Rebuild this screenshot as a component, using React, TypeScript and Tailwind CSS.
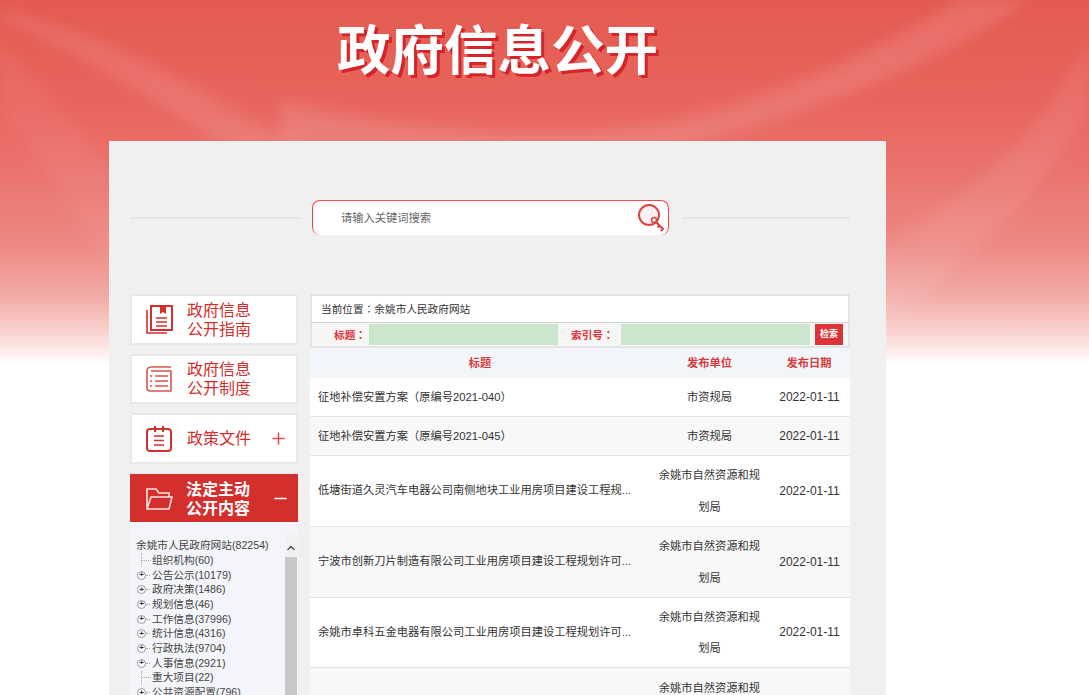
import React from 'react';
import { Plus, Minus, ChevronUp } from 'lucide-react';

const rows = [
  { title: '征地补偿安置方案（原编号2021-040）', unit: ['市资规局'], date: '2022-01-11' },
  { title: '征地补偿安置方案（原编号2021-045）', unit: ['市资规局'], date: '2022-01-11' },
  { title: '低塘街道久灵汽车电器公司南侧地块工业用房项目建设工程规...', unit: ['余姚市自然资源和规', '划局'], date: '2022-01-11' },
  { title: '宁波市创新刀片制造有限公司工业用房项目建设工程规划许可...', unit: ['余姚市自然资源和规', '划局'], date: '2022-01-11' },
  { title: '余姚市卓科五金电器有限公司工业用房项目建设工程规划许可...', unit: ['余姚市自然资源和规', '划局'], date: '2022-01-11' },
  { title: '', unit: ['余姚市自然资源和规', '划局'], date: '' },
];

const tree = [
  { label: '组织机构(60)', leaf: true },
  { label: '公告公示(10179)' },
  { label: '政府决策(1486)' },
  { label: '规划信息(46)' },
  { label: '工作信息(37996)' },
  { label: '统计信息(4316)' },
  { label: '行政执法(9704)' },
  { label: '人事信息(2921)' },
  { label: '重大项目(22)', leaf: true },
  { label: '公共资源配置(796)' },
];

function GuideIcon() {
  return (
    <svg width="27" height="29" viewBox="0 0 27 29" fill="none" stroke="#d32f2c" strokeWidth="2">
      <path d="M5 1h21v24H5z" />
      <path d="M1 5v23h20" strokeWidth="1.6" />
      <path d="M14 1h6v8l-3-2-3 2z" fill="#d32f2c" stroke="none" />
      <path d="M10 13h11M10 17h11M10 21h11" strokeWidth="1.5" />
    </svg>
  );
}

function SystemIcon() {
  return (
    <svg width="26" height="26" viewBox="0 0 26 26" fill="none" stroke="#d9534f" strokeWidth="1.6">
      <path d="M25 1H5C2 1 1 3 1 5v17c0 2 1 3 3 3h21V5H5" />
      <path d="M9 10h13M9 15h13M9 20h13" />
      <path d="M4 10h2M4 15h2M4 20h2" />
    </svg>
  );
}

function PolicyIcon() {
  return (
    <svg width="26" height="26" viewBox="0 0 26 26" fill="none" stroke="#d32f2c" strokeWidth="2">
      <rect x="1" y="3" width="24" height="22" rx="3" />
      <path d="M9 0v6M17 0v6" stroke="#d32f2c" />
      <path d="M8 10h10M8 14.5h10M8 19h10" strokeWidth="1.6" />
    </svg>
  );
}

function FolderIcon() {
  return (
    <svg width="27" height="24" viewBox="0 0 27 24" fill="none" stroke="#fbe4e3" strokeWidth="1.6">
      <path d="M1 21V2h9l3 4h10v4" />
      <path d="M1 22l4-12h21l-3 12z" />
    </svg>
  );
}

function KeySearchIcon() {
  return (
    <svg width="30" height="30" viewBox="0 0 30 30" fill="none">
      <circle cx="12" cy="12" r="10" fill="#fdf1f2" stroke="#dc4545" strokeWidth="2" />
      <circle cx="17" cy="17" r="2.5" stroke="#dc4545" strokeWidth="1.5" />
      <path d="M19 19l7.5 7.5M22.5 22.5l-2 2M26 26l-2 2" stroke="#dc4545" strokeWidth="2.2" />
    </svg>
  );
}

// centred full-width punctuation, as in the original
function Punct({ children }: { children: React.ReactNode }) {
  return <span className="font-['Noto_Sans_CJK_TC',sans-serif]">{children}</span>;
}

function RowTitle({ text }: { text: string }) {
  const parts = text.split(/([（）])/);
  return (
    <>
      {parts.map((p, i) => (p === '（' || p === '）' ? <Punct key={i}>{p}</Punct> : <React.Fragment key={i}>{p}</React.Fragment>))}
    </>
  );
}

function TreeNode({ label, leaf }: { label: string; leaf?: boolean }) {
  return (
    <div className="flex h-[14.7px] items-center">
      <span className="ml-[1px] flex w-[15px] shrink-0 items-center">
        {leaf ? (
          <span className="ml-[4px] flex h-[14px] w-[10px] items-center border-l border-dotted border-[#aaaaaa]">
            <span className="w-full border-t border-dotted border-[#aaaaaa]" />
          </span>
        ) : (
          <>
            <span className="flex h-[9px] w-[9px] shrink-0 items-center justify-center rounded-full border border-[#999999] bg-white text-[8px] font-bold leading-none text-[#333333]">+</span>
            <span className="w-[4px] border-t border-dotted border-[#aaaaaa]" />
          </>
        )}
      </span>
      <span className="whitespace-nowrap">{label}</span>
    </div>
  );
}

function SideItem({ icon, lines, after, h }: { icon: React.ReactNode; lines: string[]; after?: React.ReactNode; h: string }) {
  return (
    <div className={`flex items-center border-2 border-[#e8e8e8] bg-white pl-[14px] ${h}`}>
      <span className="flex w-[41px] shrink-0 justify-start">{icon}</span>
      <span className="flex-1 text-[16px] leading-[19px] text-[#d32f2c]">
        {lines.map((l) => <div key={l}>{l}</div>)}
      </span>
      {after}
    </div>
  );
}

export default function App() {
  return (
    <div className="relative h-[695px] w-full overflow-hidden bg-white font-['Liberation_Sans','Noto_Sans_CJK_SC',sans-serif]">
      {/* banner background */}
      <div className="absolute inset-x-0 top-0 h-[365px] bg-[linear-gradient(to_bottom,#e45a50_0%,#e8665e_30%,#eb7670_50%,#ee8a85_68%,#f3aeaa_82%,#fadcda_93%,#ffffff_100%)]" />
      <svg className="absolute left-0 top-0 blur-[7px]" width="1089" height="365" viewBox="0 0 1089 365" fill="none">
        <path d="M0 20C80 50 180 120 300 190 340 210 420 235 500 250L510 215C400 190 300 150 200 90 120 45 50 20 0 10z" fill="#ffffff" opacity="0.1" />
        <path d="M280 140C420 190 560 190 660 150 760 130 880 90 1000 20L1030 0H960C860 60 760 105 650 125 540 140 400 130 280 100z" fill="#ffffff" opacity="0.12" />
        <path d="M760 300C880 260 1000 180 1060 90L1089 40V110C1040 200 950 280 886 326z" fill="#ffffff" opacity="0.08" />
        <path d="M0 40C60 100 140 220 260 300L130 300C80 220 30 150 0 110z" fill="#ffffff" opacity="0.05" />
      </svg>

      <div className="relative">
        {/* page title */}
        <div className="flex h-[141px] justify-center pr-[94px]">
          <h1 className="mt-[17px] h-[70px] text-[53.5px] font-bold leading-[70px] text-white [text-shadow:3px_3px_0_#d5242a]">政府信息公开</h1>
        </div>

        <div className="ml-[109px] w-[777px] bg-[#f0f0f0] px-[21px] pb-[40px]">
          {/* search */}
          <div className="flex items-center pt-[59px]">
            <div className="h-[2px] w-[169px] bg-[#e4e4e4]" />
            <div className="mx-[13px] flex h-[35px] w-[357px] items-center justify-between rounded-[8px] border border-b-0 border-[#f0484e] bg-white pl-[28px] pr-[1px] text-[11.25px] text-[#666666]">
              <span>请输入关键词搜索</span>
              <KeySearchIcon />
            </div>
            <div className="h-[2px] w-[168px] bg-[#e4e4e4]" />
          </div>

          <div className="mt-[59px] flex gap-[12px]">
            {/* left column */}
            <div className="flex w-[168px] shrink-0 flex-col">
              <div className="flex flex-col gap-[9px]">
                <SideItem h="h-[51px]" icon={<GuideIcon />} lines={['政府信息', '公开指南']} />
                <SideItem h="h-[50px]" icon={<SystemIcon />} lines={['政府信息', '公开制度']} />
                <SideItem h="h-[51px]" icon={<PolicyIcon />} lines={['政策文件']} after={<Plus size={19} className="mr-[8px] text-[#e05252]" />} />
                <div className="flex h-[49px] items-center border-t border-[#e8e8e8] bg-[#d32f2c] pl-[16px] pt-[1px]">
                  <span className="flex w-[40px] shrink-0 justify-start"><FolderIcon /></span>
                  <span className="flex-1 text-[16px] font-bold leading-[19px] text-white">
                    <div>法定主动</div>
                    <div>公开内容</div>
                  </span>
                  <Minus size={19} className="mr-[8px] text-white" />
                </div>
              </div>
              <div className="flex h-[180px] bg-[#f3f5fa] pl-[6px] pt-[16px] text-[10.67px] text-[#444444]">
                <div className="flex-1 leading-[15px]">
                  <div className="h-[15px] whitespace-nowrap">余姚市人民政府网站(82254)</div>
                  {tree.map((t) => <TreeNode key={t.label} label={t.label} leaf={t.leaf} />)}
                </div>
                <div className="-mt-[5px] mr-[1px] w-[12px] bg-[#f1f1f1]">
                  <div className="flex h-[24px] items-center justify-center pt-[6px]"><ChevronUp size={12} strokeWidth={3} className="text-[#555555]" /></div>
                  <div className="h-[160px] bg-[#c8c8c8]" />
                </div>
              </div>
            </div>

            {/* right column */}
            <div className="w-[540px] shrink-0">
              <div className="flex h-[29px] items-center border-2 border-b border-[#e4e4e4] border-b-[#d0d0d0] bg-white pb-[1px] pl-[9px] text-[10.67px] text-[#333333]">
                <span>当前位置<Punct>：</Punct>余姚市人民政府网站</span>
              </div>
              <div className="flex h-[25px] items-center border-x-2 border-b-2 border-[#e4e4e4] bg-[#f6f6f6] pl-[22px] pr-[5px] text-[10.67px] font-bold text-[#e0363a]">
                <span className="w-[35px] shrink-0 whitespace-nowrap">标题<Punct>：</Punct></span>
                <div className="h-[21px] w-[189px] shrink-0 bg-[#cce6cd]" />
                <span className="ml-[13px] w-[50px] shrink-0 whitespace-nowrap">索引号<Punct>：</Punct></span>
                <div className="h-[21px] w-[189px] shrink-0 bg-[#cce6cd]" />
                <button className="ml-[5px] h-[21px] w-[28px] bg-[#dc3436] text-[9px] font-bold text-white">检索</button>
              </div>
              <div className="flex h-[30px] items-center bg-[#f2f5fa] text-[11.25px] font-bold text-[#d8393a]">
                <span className="w-[341px] pr-[1px] text-center">标题</span>
                <span className="w-[117px] text-center">发布单位</span>
                <span className="flex-1 text-center">发布日期</span>
              </div>
              {rows.map((r, i) => (
                <div key={i} className={`flex items-center border-b border-[#e4e4e4] text-[11.25px] text-[#333333] ${r.unit.length > 1 ? 'h-[70.8px]' : 'h-[39px]'} ${i % 2 ? 'bg-[#f8f8f8]' : 'bg-white'}`}>
                  <span className="w-[341px] truncate pl-[8px]"><RowTitle text={r.title} /></span>
                  <span className="w-[117px] pt-[2px] text-center leading-[31.5px]">
                    {r.unit.map((u) => <div key={u}>{u}</div>)}
                  </span>
                  <span className="flex-1 pl-[1px] text-center text-[12px]">{r.date}</span>
                </div>
              ))}
            </div>
          </div>
        </div>
      </div>
    </div>
  );
}
